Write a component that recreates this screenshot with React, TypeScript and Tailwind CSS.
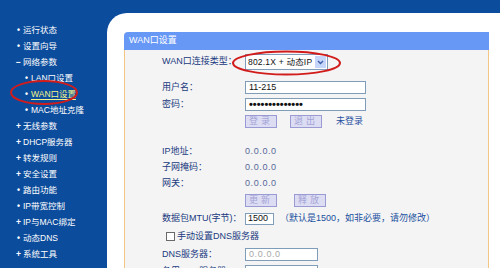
import React from 'react';

const navItems = [
  { label: '运行状态', mark: '•', sub: false },
  { label: '设置向导', mark: '•', sub: false },
  { label: '网络参数', mark: '−', sub: false },
  { label: 'LAN口设置', mark: '•', sub: true },
  { label: 'WAN口设置', mark: '•', sub: true, active: true },
  { label: 'MAC地址克隆', mark: '•', sub: true },
  { label: '无线参数', mark: '+', sub: false },
  { label: 'DHCP服务器', mark: '+', sub: false },
  { label: '转发规则', mark: '+', sub: false },
  { label: '安全设置', mark: '+', sub: false },
  { label: '路由功能', mark: '•', sub: false },
  { label: 'IP带宽控制', mark: '•', sub: false },
  { label: 'IP与MAC绑定', mark: '+', sub: false },
  { label: '动态DNS', mark: '•', sub: false },
  { label: '系统工具', mark: '+', sub: false },
];

function Label({ children }: { children: React.ReactNode }) {
  return <div className="w-[83px] shrink-0 text-[#203a80]">{children}</div>;
}

function Btn({ children }: { children: React.ReactNode }) {
  return (
    <div className="w-[32px] h-[13px] border border-[#9a9ad4] bg-[#dcdcf3] text-[#a4a4d6] flex items-center justify-center tracking-[3px] leading-none">
      {children}
    </div>
  );
}

export default function App() {
  return (
    <div className="relative w-[500px] h-[268px] overflow-hidden flex bg-[#0b4c9c] font-['Liberation_Sans','Noto_Sans_CJK_SC',sans-serif] text-[9px]">
      {/* Sidebar */}
      <div className="w-[107px] shrink-0 pt-[22px] text-white text-[8.5px]">
        {navItems.map((it) => (
          <div
            key={it.label}
            className={`h-[16px] flex items-center ${it.sub ? 'pl-[22px]' : 'pl-[14px]'}`}
          >
            <span className="w-[9px] text-center font-bold leading-none">{it.mark}</span>
            <span
              className={it.active ? 'text-[#f4f48a] underline underline-offset-2' : ''}
            >
              {it.label}
            </span>
          </div>
        ))}
      </div>

      {/* Main */}
      <div className="flex-1 pt-[13px]">
        <div className="h-full bg-white rounded-tl-[20px] pt-[19px] pl-[17px] pr-[11px]">
          <div className="h-[18px] bg-[#6898f6] rounded-tl-[4px] flex items-center pl-[5px] text-white">
            WAN口设置
          </div>
          <div className="h-[300px] bg-[#f4f4f4] border-x border-[#f2c684] pt-[3px] pl-[37px]">
            <div className="h-[18px] flex items-center">
              <Label>WAN口连接类型：</Label>
              <div className="w-[83px] h-[16px] border border-[#7f9db9] bg-white flex items-center justify-between pl-[2px] pr-[1px]">
                <span className="text-[#111] whitespace-nowrap text-[8.5px] tracking-[0.2px]">802.1X + 动态IP</span>
                <span className="w-[11px] h-[12px] shrink-0 bg-[#c6d6fb] flex items-center justify-center">
                  <svg width="7" height="5" viewBox="0 0 7 5">
                    <path d="M1 1l2.5 2.5L6 1" fill="none" stroke="#3c5ca8" strokeWidth="1.4" />
                  </svg>
                </span>
              </div>
            </div>

            <div className="mt-[8px] h-[17px] flex items-center">
              <Label>用户名：</Label>
              <div className="w-[121px] h-[13px] border border-[#7f9db9] bg-white flex items-center pl-[3px] text-[#111]">11-215</div>
            </div>
            <div className="h-[17px] flex items-center">
              <Label>密码：</Label>
              <div className="w-[121px] h-[13px] border border-[#7f9db9] bg-white flex items-center pl-[3px] text-[#111] text-[11px] font-bold leading-none">
                ••••••••••••••
              </div>
            </div>
            <div className="h-[17px] flex items-center">
              <Label>{''}</Label>
              <Btn>登录</Btn>
              <div className="ml-[13px]">
                <Btn>退出</Btn>
              </div>
              <span className="ml-[14px] text-[#1f4fa0]">未登录</span>
            </div>

            <div className="mt-[14px] h-[16px] flex items-center">
              <Label>IP地址：</Label>
              <span className="text-[#56689a] tracking-[0.6px]">0.0.0.0</span>
            </div>
            <div className="h-[16px] flex items-center">
              <Label>子网掩码：</Label>
              <span className="text-[#56689a] tracking-[0.6px]">0.0.0.0</span>
            </div>
            <div className="h-[16px] flex items-center">
              <Label>网关：</Label>
              <span className="text-[#56689a] tracking-[0.6px]">0.0.0.0</span>
            </div>
            <div className="h-[16px] flex items-center">
              <Label>{''}</Label>
              <Btn>更新</Btn>
              <div className="ml-[17px]">
                <Btn>释放</Btn>
              </div>
            </div>

            <div className="mt-[2px] h-[17px] flex items-center">
              <Label>数据包MTU(字节)：</Label>
              <div className="w-[29px] h-[12px] border border-[#7f9db9] bg-white flex items-center pl-[2px] text-[#111]">1500</div>
              <span className="ml-[6px] text-[#2050a0] whitespace-nowrap">（默认是1500，如非必要，请勿修改）</span>
            </div>
            <div className="h-[19px] flex items-center pl-[4px]">
              <span className="w-[9px] h-[9px] border border-[#6a6a6a] bg-white"></span>
              <span className="ml-[2px] text-[#203a80]">手动设置DNS服务器</span>
            </div>
            <div className="h-[17px] flex items-center">
              <Label>DNS服务器：</Label>
              <div className="w-[73px] h-[13px] border border-[#7f9db9] bg-white flex items-center pl-[3px] text-[#a8a8a8] tracking-[0.6px]">0.0.0.0</div>
            </div>
            <div className="h-[17px] flex items-center">
              <Label>备用DNS服务器：</Label>
              <div className="w-[73px] h-[13px] border border-[#7f9db9] bg-white flex items-center pl-[3px] text-[#a8a8a8] tracking-[0.6px]">0.0.0.0</div>
            </div>
          </div>
        </div>
      </div>

      {/* red annotation ellipses */}
      <svg className="absolute inset-0 pointer-events-none" width="500" height="268" viewBox="0 0 500 268">
        <ellipse cx="44" cy="92.5" rx="33" ry="11.5" fill="none" stroke="#d21c1c" strokeWidth="2" />
        <ellipse cx="286.5" cy="63" rx="53.5" ry="11.5" fill="none" stroke="#d21c1c" strokeWidth="2" />
      </svg>
    </div>
  );
}
